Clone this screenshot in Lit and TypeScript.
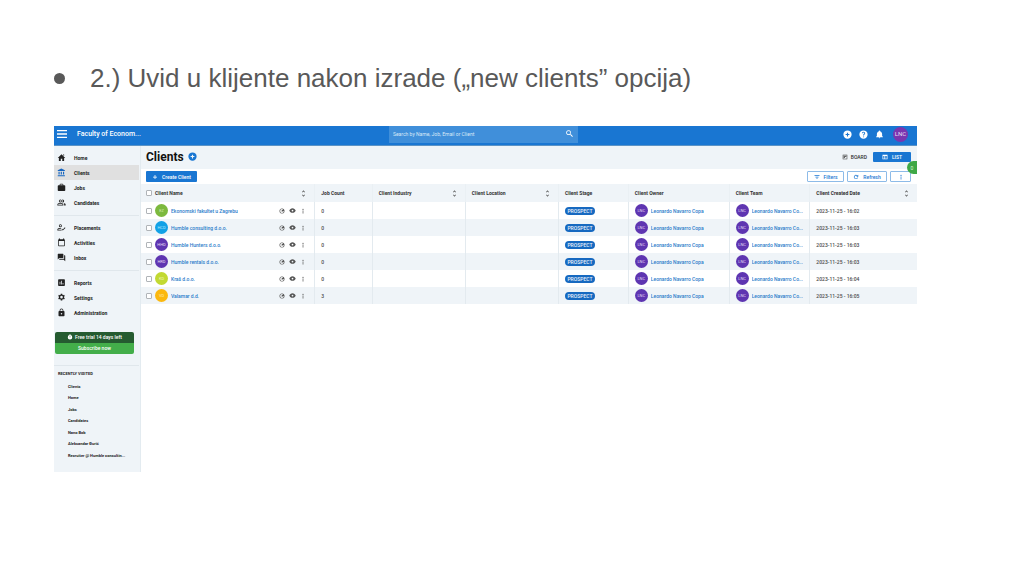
import { LitElement, html, css, svg } from "lit";
import { customElement, property } from "lit/decorators.js";
import { classMap } from "lit/directives/class-map.js";

const icons: Record<string, unknown> = {
  menu: svg`<path d="M2 4h20v2.6H2zM2 10.7h20v2.6H2zM2 17.4h20V20H2z"/>`,
  home: svg`<path d="M10 21v-6h4v6h5v-8h3L12 3 2 13h3v8zM16 4h3v4l-3-3z"/>`,
  bank: svg`<path d="M11.5 1 2 6v2h19V6zM4 10v7h3v-7zm6 0v7h3v-7zm6 0v7h3v-7zM2 19v3h19v-3z"/>`,
  jobs: svg`<path d="M9 2h6l2 2v2h3a2 2 0 0 1 2 2v11a2 2 0 0 1-2 2H4a2 2 0 0 1-2-2V8c0-1.100.9-2 2-2h3V4zm0 2v2h6V4z" fill-rule="evenodd"/>`,
  people: svg`<path fill-rule="evenodd" d="M9 4a4 4 0 1 1 0 8 4 4 0 0 1 0-8zm0 2a2 2 0 1 0 0 4 2 2 0 0 0 0-4zM1 17c0-2.700 5.300-4 8-4s8 1.300 8 4v3H1zm2 1h12v-1c0-.8-3.500-2-6-2s-6 1.200-6 2zM15 4a4 4 0 0 1 0 8c-.5 0-.9-.1-1.300-.2a5.500 5.500 0 0 0 0-7.600C14.100 4.100 14.500 4 15 4zm2.500 9.400C20 14 23 15.100 23 17v3h-4v-3c0-1.500-.6-2.700-1.500-3.600z"/>`,
  placement: svg`<path fill-rule="evenodd" d="M9 3a4 4 0 1 1 0 8 4 4 0 0 1 0-8zm0 2a2 2 0 1 0 0 4 2 2 0 0 0 0-4zM1 17c0-3 5-4 8-4l3 .3-2 2c-3 0-7 .7-7 1.700v1h8l2 2H1zm14.500 3-3.500-3.500 1.500-1.500 2 2L21 11.500l1.500 1.500z"/>`,
  calendar: svg`<path fill-rule="evenodd" d="M5 3V1h3v2h8V1h3v2c1.100 0 2 .9 2 2v15a2 2 0 0 1-2 2H5a2 2 0 0 1-2-2V5c0-1.100.9-2 2-2zm0 5v12h14V8z"/>`,
  inbox: svg`<path d="M3 2h13a1 1 0 0 1 1 1v9a1 1 0 0 1-1 1H6l-4 4V3a1 1 0 0 1 1-1zm16 4h2a1 1 0 0 1 1 1v15l-4-4H7a1 1 0 0 1-1-1v-2h13z"/>`,
  reports: svg`<path fill-rule="evenodd" d="M5 3h14a2 2 0 0 1 2 2v14a2 2 0 0 1-2 2H5a2 2 0 0 1-2-2V5c0-1.100.9-2 2-2zm2 7v7h2v-7zm4-3v10h2V7zm4 6v4h2v-4z"/>`,
  gear: svg`<path fill-rule="evenodd" d="m10 2-.5 2.700-1.700 1-2.600-1-2 3.500 2.100 1.800v2l-2.100 1.800 2 3.500 2.600-1 1.700 1L10 20h4l.5-2.700 1.700-1 2.600 1 2-3.500-2.100-1.800v-2l2.100-1.800-2-3.500-2.600 1-1.700-1L14 2zm2 5.500a3.500 3.500 0 1 1 0 7 3.500 3.500 0 0 1 0-7z"/>`,
  lock: svg`<path fill-rule="evenodd" d="M12 1a5 5 0 0 1 5 5v2h1a2 2 0 0 1 2 2v10a2 2 0 0 1-2 2H6a2 2 0 0 1-2-2V10c0-1.100.9-2 2-2h1V6a5 5 0 0 1 5-5zm0 2a3 3 0 0 0-3 3v2h6V6a3 3 0 0 0-3-3zm0 10a2 2 0 1 0 0 4 2 2 0 0 0 0-4z"/>`,
  search: svg`<path fill-rule="evenodd" d="M9.500 3a6.500 6.500 0 0 1 5 10.600l.5.600h1l5 5-1.800 1.800-5-5v-1l-.5-.5A6.500 6.500 0 1 1 9.500 3zm0 2a4.500 4.500 0 1 0 0 9 4.500 4.500 0 0 0 0-9z"/>`,
  plusCircle: svg`<path fill-rule="evenodd" d="M12 1a11 11 0 1 1 0 22 11 11 0 0 1 0-22zm-1.500 6v3.500H7v3h3.500V17h3v-3.500H17v-3h-3.500V7z"/>`,
  help: svg`<path fill-rule="evenodd" d="M12 1a11 11 0 1 1 0 22 11 11 0 0 1 0-22zm-1 16v2.500h2.500V17zm1-12.500a4.300 4.300 0 0 0-4.300 4.300H10a2 2 0 1 1 4 0c0 2-3 2-3 6h2.400c0-2.700 3-3.200 3-6A4.300 4.300 0 0 0 12 4.500z"/>`,
  bell: svg`<path d="M12 22a2 2 0 0 0 2-2h-4a2 2 0 0 0 2 2zm7-6v-5c0-3.500-2-6.200-5-6.900V3a2 2 0 0 0-4 0v1.100c-3 .7-5 3.400-5 6.900v5l-2 2v1h18v-1z"/>`,
  board: svg`<path fill-rule="evenodd" d="M3 3h18v18H3zm2 2v14h14V5zm2 2h4v9H7zm6 0h4v5h-4z"/>`,
  list: svg`<path fill-rule="evenodd" d="M2 3h20v18H2zm2 5v3h5V8zm7 0v3h9V8zm-7 5v5h5v-5zm7 0v5h9v-5z"/>`,
  plus: svg`<path d="M10.500 4h3v6.500H20v3h-6.500V20h-3v-6.500H4v-3h6.500z"/>`,
  filter: svg`<path d="M2 5h20v2.500H2zm4 6h12v2.500H6zm4 6h4v2.500h-4z"/>`,
  refresh: svg`<path d="M17.700 6.300A8 8 0 1 0 19.700 14h-2.500a5.600 5.600 0 1 1-1.300-5.900L13 11h8V3z"/>`,
  dots: svg`<circle cx="12" cy="5" r="2.500"/><circle cx="12" cy="12" r="2.500"/><circle cx="12" cy="19" r="2.500"/>`,
  sort: svg`<path d="m12 1 5 6-1.500 1.500L12 5 8.500 8.500 7 7zm0 22-5-6 1.500-1.500L12 19l3.500-3.500L17 17z"/>`,
  globe: svg`<path fill-rule="evenodd" d="M12 2a10 10 0 1 1 0 20 10 10 0 0 1 0-20zm0 2.400a7.600 7.600 0 1 0 7.600 8.600L15 12l-2 4-3-3 1-4 5-2a7.600 7.600 0 0 0-4-2.600z"/>`,
  eye: svg`<path fill-rule="evenodd" d="M12 4c5 0 9.300 3.300 11 8-1.700 4.700-6 8-11 8S2.700 16.700 1 12c1.700-4.700 6-8 11-8zm0 5a3 3 0 1 0 0 6 3 3 0 0 0 0-6z"/>`,
  clock: svg`<path fill-rule="evenodd" d="M9 1h6v2H9zm3 3a9 9 0 1 1 0 18 9 9 0 0 1 0-18zm-1 4v6h2V8z"/>`,
};

@customElement("app-icon")
class AppIcon extends LitElement {
  @property() name = "";
  static styles = css`
    :host { display: inline-flex; flex: none; width: 9px; height: 9px; }
    svg { width: 100%; height: 100%; fill: currentColor; display: block; }
  `;
  render() {
    return html`<svg viewBox="0 0 24 24" aria-hidden="true">${icons[this.name]}</svg>`;
  }
}

interface NavItem { icon: string; label: string; active?: boolean }
const nav: NavItem[][] = [
  [
    { icon: "home", label: "Home" },
    { icon: "bank", label: "Clients", active: true },
    { icon: "jobs", label: "Jobs" },
    { icon: "people", label: "Candidates" },
  ],
  [
    { icon: "placement", label: "Placements" },
    { icon: "calendar", label: "Activities" },
    { icon: "inbox", label: "Inbox" },
  ],
  [
    { icon: "reports", label: "Reports" },
    { icon: "gear", label: "Settings" },
    { icon: "lock", label: "Administration" },
  ],
];

const recent = ["Clients", "Home", "Jobs", "Candidates", "Nano Bob", "Aleksandar Đurić", "Recruiter @ Humble consultin..."];

const columns = [
  { label: "Client Name", cls: "name", sort: true },
  { label: "Job Count", cls: "jobs", sort: false },
  { label: "Client Industry", cls: "industry", sort: true },
  { label: "Client Location", cls: "location", sort: true },
  { label: "Client Stage", cls: "stage", sort: false },
  { label: "Client Owner", cls: "owner", sort: false },
  { label: "Client Team", cls: "team", sort: false },
  { label: "Client Created Date", cls: "date", sort: true },
];

const clients = [
  { initials: "EZ", tone: "green", name: "Ekonomski fakultet u Zagrebu", jobs: 0, time: "16:02" },
  { initials: "HCD", tone: "sky", name: "Humble consulting d.o.o.", jobs: 0, time: "16:03" },
  { initials: "HHD", tone: "violet", name: "Humble Hunters d.o.o.", jobs: 0, time: "16:03" },
  { initials: "HRD", tone: "violet", name: "Humble rentals d.o.o.", jobs: 0, time: "16:03" },
  { initials: "KD", tone: "lime", name: "Kraš d.o.o.", jobs: 0, time: "16:04" },
  { initials: "VD", tone: "amber", name: "Valamar d.d.", jobs: 3, time: "16:05" },
];

@customElement("app-root")
class AppRoot extends LitElement {
  static styles = css`
    :host {
      display: block;
      min-height: 100vh;
      background: #fff;
      color: #333;
      font-family: Roboto, sans-serif;
    }
    * { box-sizing: border-box; }
    button, input { font: inherit; color: inherit; margin: 0; }
    button { border: 0; padding: 0; background: none; display: inline-flex; align-items: center; justify-content: center; }
    a { color: inherit; text-decoration: none; }
    ul { list-style: none; margin: 0; padding: 0; }

    .slide { padding: 62px 107px 0 54px; }
    .heading {
      display: flex; align-items: center; gap: 25px;
      margin: 0 0 32px;
      font: 400 26px/32px "Liberation Sans", Arial, sans-serif;
      color: #595959;
    }
    .bullet { width: 11px; height: 11px; border-radius: 50%; background: #595959; }

    .app { font-size: 5px; line-height: 8px; font-weight: 500; position: relative; }
    .top {
      display: grid; grid-template-columns: 335px minmax(0, 189px) 1fr;
      height: 20px; padding-bottom: 1px;
      background: #1976d2; color: #fff;
      border-bottom: 1px solid #5b93c6;
    }
    .brand { display: flex; align-items: center; gap: 9px; padding: 0 0 3px 2px; font-size: 7px; font-weight: 500; }
    .brand app-icon { width: 12px; height: 12px; }
    .search { display: flex; align-items: center; background: #408fda; padding: 0 4px 2px; height: 17px; }
    .search input { flex: 1; min-width: 0; border: 0; padding: 0; background: none; outline: none; height: 10px; font-weight: 400; }
    .search input::placeholder { color: #d9e9f8; opacity: 1; }
    .tools { display: flex; align-items: center; justify-content: flex-end; gap: 7px; padding: 0 9px 2px 0; }
    .avatar {
      display: inline-flex; align-items: center; justify-content: center; flex: none;
      width: 13px; height: 13px; border-radius: 50%;
      background: #5e35b1; color: #e4dcf3; font-size: 4px; font-weight: 400;
    }
    .avatar.me { width: 15px; height: 15px; font-size: 6px; margin-left: 2px; background: #7a35b0; }
    .avatar.green { background: #7cb93e; color: #d5eebd; }
    .avatar.sky { background: #12a1e6; color: #b8e6fb; }
    .avatar.lime { background: #c2d932; color: #eef5bd; }
    .avatar.amber { background: #fbb80f; color: #feeab0; }

    .body { display: flex; }
    .side {
      width: 87px; flex: none; padding: 4px 1px 11px 0;
      background: #eff4f8; border-right: 1px solid #e3ebf0;
      color: #222;
    }
    .group { padding-bottom: 5px; margin-bottom: 4px; border-bottom: 1px solid #e0e7ec; }
    .group.last { border: 0; padding: 0; margin: 0 0 12px; }
    .item { display: flex; align-items: center; gap: 8px; height: 15px; padding-left: 3px; font-weight: 700; }
    .item.active { background: #e0e0e0; }
    .item.active app-icon { color: #1565c0; }
    .trial { margin: 0 5px 11px 1px; border-radius: 2px; overflow: hidden; color: #fff; text-align: center; }
    .left { display: flex; align-items: center; justify-content: center; gap: 2px; height: 11px; padding-bottom: 1px; background: #255b30; }
    .left app-icon { width: 6px; height: 6px; }
    .subscribe { width: 100%; height: 11px; padding-bottom: 1px; background: #43ae4a; }
    .recent { border-top: 1px solid #e0e7ec; padding: 4px 0 0 4px; font-size: 4px; font-weight: 700; }
    .recent h2 { margin: 0 0 3px; font-size: 4px; line-height: 8px; }
    .recent ul { display: grid; grid-auto-rows: 11px 12px; padding-left: 10px; }
    .recent li { display: flex; align-items: center; white-space: nowrap; }

    .main { flex: 1; min-width: 0; }
    .titlebar {
      display: flex; align-items: center; gap: 4px;
      height: 23px; padding: 0 6px 2px 5px; background: #eff4f8; color: #1976d2;
    }
    .titlebar h1 { margin: 0; font-size: 12px; line-height: 16px; font-weight: 700; color: #111; }
    .views { margin-left: auto; display: flex; }
    .view { gap: 3px; height: 10px; padding: 0 6px; color: #333; font-weight: 500; }
    .view.on { width: 38px; gap: 4px; background: #1976d2; color: #fff; border-radius: 1px; }
    .view app-icon, .create app-icon, .outline app-icon { width: 6px; height: 6px; }
    .toolbar { display: flex; gap: 3px; height: 15px; padding: 2px 6px 0 5px; font-weight: 500; }
    .create { width: 51px; height: 11px; gap: 4px; margin-right: auto; background: #1976d2; color: #fff; border-radius: 1px; }
    .outline { height: 11px; gap: 4px; border: 1px solid #8dbbe8; border-radius: 1px; color: #1976d2; background: #fff; }
    .filters { width: 37px; }
    .refresh { width: 40px; }
    .more { width: 21px; }
    .tab {
      position: absolute; right: 0; top: 35px;
      width: 10px; height: 13px; border-radius: 7px 0 0 7px;
      background: #3fa846; color: #d7f3d8; font-weight: 400;
    }

    table { width: 100%; table-layout: fixed; border-collapse: collapse; }
    th, td { padding: 0 6px; text-align: left; border-left: 1px solid #e3eaef; white-space: nowrap; overflow: hidden; }
    th:first-child, td:first-child { border-left: 0; padding-left: 5px; }
    th { height: 18px; background: #eff4f8; color: #333; font-weight: 700; border-left-color: #eaf0f4; }
    td { height: 17px; font-weight: 500; color: #4a4a4a; }
    tbody tr:nth-child(even) { background: #eff4f8; }
    .name { width: 22.4%; }
    .jobs { width: 7.4%; }
    .industry { width: 12%; }
    .location { width: 12%; }
    .stage { width: 9%; }
    .owner { width: 13%; }
    .team { width: 10.4%; }
    .cell { display: flex; align-items: center; gap: 3px; }
    .cell a { color: #2a7cca; overflow: hidden; text-overflow: ellipsis; }
    .push { margin-left: auto; display: flex; align-items: center; color: #555; }
    .push app-icon { width: 7px; height: 7px; }
    .actions { gap: 4px; padding-right: 2px; }
    .actions app-icon { width: 6px; height: 6px; }
    .actions app-icon[name="eye"] { width: 7px; height: 7px; }
    th .push { padding-right: 1px; }
    input.tick {
      appearance: none; width: 6px; height: 6px; margin: 0; flex: none;
      border: 1px solid #b0b4b8; border-radius: 1px; background: #fff;
    }
    .tick:checked { background: #1976d2; }
    .pill {
      display: inline-flex; align-items: center; justify-content: center;
      width: 30px; height: 8px; border-radius: 4px;
      background: #1769c0; color: #e8f1fb;
    }
  `;

  private owner(name: string) {
    return html`<div class="cell"><span class="avatar">LNC</span><a href="#">${name}</a></div>`;
  }

  render() {
    return html`
      <main class="slide">
        <div class="heading"><span class="bullet"></span><span>2.) Uvid u klijente nakon izrade („new clients” opcija)</span></div>
        <section class="app">
          <header class="top">
            <div class="brand">
              <button aria-label="Menu"><app-icon name="menu"></app-icon></button>
              <span>Faculty of Econom...</span>
            </div>
            <div class="search">
              <input type="search" aria-label="Search" placeholder="Search by Name, Job, Email or Client" />
              <button aria-label="Run search"><app-icon name="search"></app-icon></button>
            </div>
            <div class="tools">
              <button aria-label="Add"><app-icon name="plusCircle"></app-icon></button>
              <button aria-label="Help"><app-icon name="help"></app-icon></button>
              <button aria-label="Notifications"><app-icon name="bell"></app-icon></button>
              <span class="avatar me">LNC</span>
            </div>
          </header>
          <div class="body">
            <nav class="side">
              ${nav.map((group, i) => html`
                <ul class=${classMap({ group: true, last: i === nav.length - 1 })}>
                  ${group.map((n) => html`
                    <li><a href="#" class=${classMap({ item: true, active: !!n.active })}>
                      <app-icon name=${n.icon}></app-icon><span>${n.label}</span>
                    </a></li>`)}
                </ul>`)}
              <div class="trial">
                <div class="left"><app-icon name="clock"></app-icon><span>Free trial 14 days left</span></div>
                <button class="subscribe">Subscribe now</button>
              </div>
              <div class="recent">
                <h2>RECENTLY VISITED</h2>
                <ul>${recent.map((r) => html`<li><a href="#">${r}</a></li>`)}</ul>
              </div>
            </nav>
            <div class="main">
              <div class="titlebar">
                <h1>Clients</h1>
                <button aria-label="Add client"><app-icon name="plusCircle"></app-icon></button>
                <div class="views">
                  <button class="view"><app-icon name="board"></app-icon>BOARD</button>
                  <button class="view on"><app-icon name="list"></app-icon>LIST</button>
                </div>
              </div>
              <div class="toolbar">
                <button class="create"><app-icon name="plus"></app-icon>Create Client</button>
                <button class="outline filters"><app-icon name="filter"></app-icon>Filters</button>
                <button class="outline refresh"><app-icon name="refresh"></app-icon>Refresh</button>
                <button class="outline more" aria-label="More"><app-icon name="dots"></app-icon></button>
              </div>
              <table>
                <thead>
                  <tr>
                    ${columns.map((c, i) => html`
                      <th class=${c.cls}><div class="cell">
                        ${i === 0 ? html`<input class="tick" type="checkbox" aria-label="Select all" />` : ""}
                        <span>${c.label}</span>
                        ${c.sort ? html`<span class="push"><app-icon name="sort"></app-icon></span>` : ""}
                      </div></th>`)}
                  </tr>
                </thead>
                <tbody>
                  ${clients.map((c) => html`
                    <tr>
                      <td><div class="cell">
                        <input class="tick" type="checkbox" aria-label=${c.name} />
                        <span class="avatar ${c.tone}">${c.initials}</span>
                        <a href="#">${c.name}</a>
                        <span class="push actions">
                          <app-icon name="globe"></app-icon><app-icon name="eye"></app-icon><app-icon name="dots"></app-icon>
                        </span>
                      </div></td>
                      <td>${c.jobs}</td>
                      <td></td>
                      <td></td>
                      <td><div class="cell"><span class="pill">PROSPECT</span></div></td>
                      <td>${this.owner("Leonardo Navarro Copa")}</td>
                      <td>${this.owner("Leonardo Navarro Co...")}</td>
                      <td>2023-11-25 - ${c.time}</td>
                    </tr>`)}
                </tbody>
              </table>
            </div>
          </div>
          <button class="tab" aria-label="Open panel">0</button>
        </section>
      </main>
    `;
  }
}
